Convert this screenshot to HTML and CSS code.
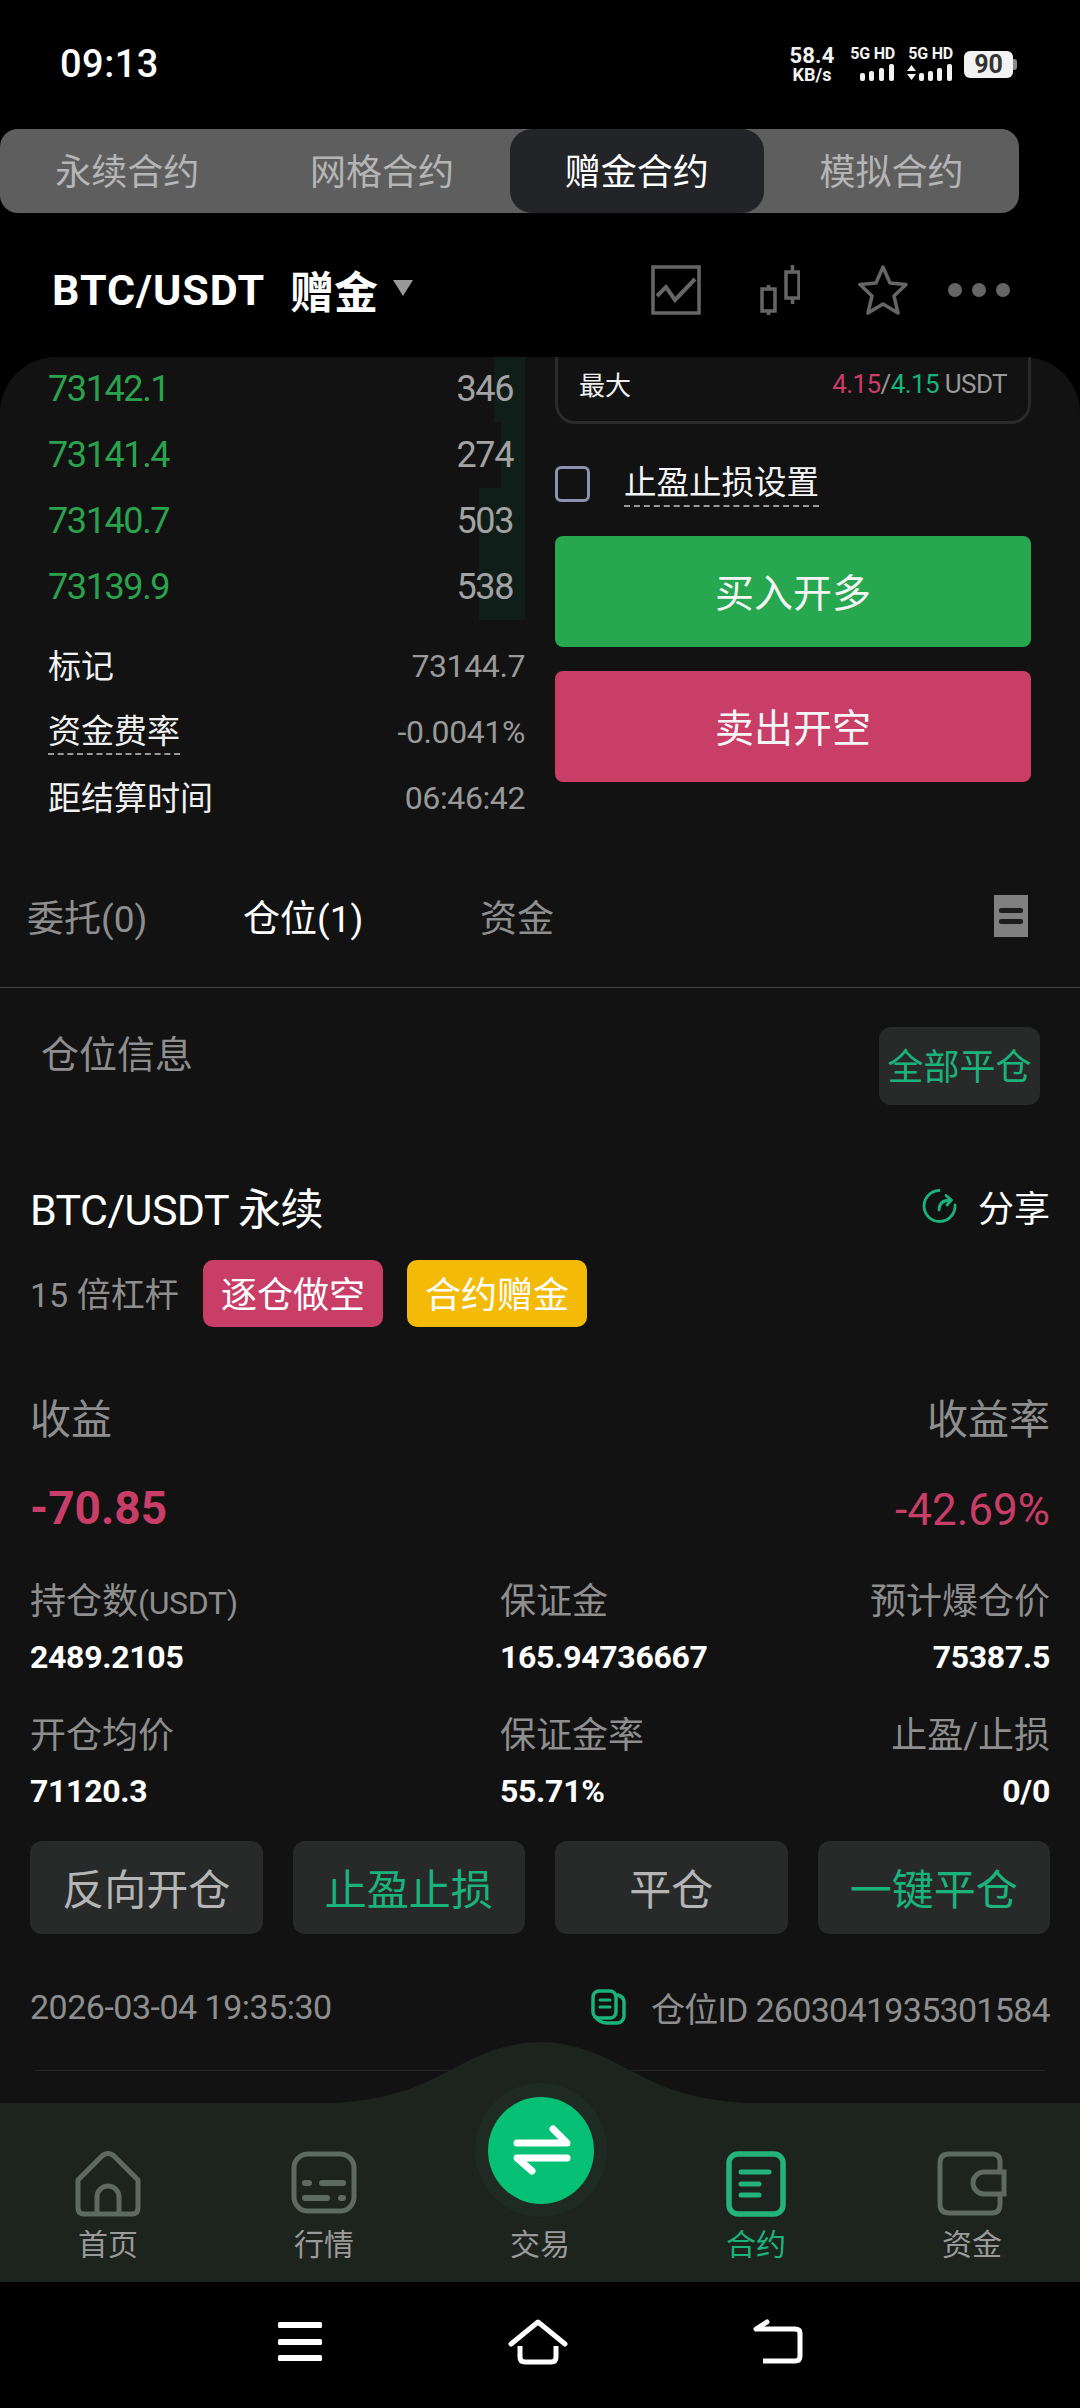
FILE: index.html
```html
<!DOCTYPE html>
<html lang="zh-CN">
<head>
  <meta charset="utf-8">
  <title>赠金合约</title>
  <link rel="stylesheet" href="styles.css">
</head>
<body>
  <div class="page">
    <div class="status-bar">
      <div class="clock">09:13</div>
      <div class="status-right">
        <div class="net-speed"><span class="speed-num">58.4</span><span class="speed-unit">KB/s</span></div>
        <div class="sim">
          <span class="sim-label">5G HD</span>
          <svg width="36" height="17" viewBox="0 0 36 17" fill="#f2f2f2"><rect x="1" y="9" width="5" height="8" rx="2"/><rect x="10" y="7" width="5" height="10" rx="2"/><rect x="20" y="4" width="5" height="13" rx="2"/><rect x="30" y="0" width="5" height="17" rx="2"/></svg>
        </div>
        <div class="sim">
          <span class="sim-label">5G HD</span>
          <svg width="47" height="17" viewBox="0 0 47 17" fill="#f2f2f2"><path d="M1 7 L5.500 1 L10 7Z M1 10 L10 10 L5.500 16Z"/><rect x="13" y="9" width="5" height="8" rx="2"/><rect x="22" y="7" width="5" height="10" rx="2"/><rect x="31" y="4" width="5" height="13" rx="2"/><rect x="41" y="0" width="5" height="17" rx="2"/></svg>
        </div>
        <div class="battery"><span class="battery-level">90</span><span class="battery-nub"></span></div>
      </div>
    </div>

    <div class="contract-tabs">
      <div class="contract-tab">永续合约</div>
      <div class="contract-tab">网格合约</div>
      <div class="contract-tab active">赠金合约</div>
      <div class="contract-tab">模拟合约</div>
    </div>

    <div class="pair-bar">
      <div class="pair-name">BTC/USDT</div>
      <div class="pair-kind">赠金</div>
      <div class="pair-caret"></div>
      <div class="pair-tools">
        <svg width="50" height="50" viewBox="0 0 50 50" fill="none" stroke="#666" stroke-width="3.500"><rect x="2" y="2" width="46" height="46"/><path d="M6 31 L15 22 L24 35 L44 14" stroke-width="4"/></svg>
        <svg class="tool-candle" width="40" height="50" viewBox="0 0 40 50" fill="none" stroke="#666" stroke-width="3.500"><rect x="2" y="24" width="13" height="22"/><path d="M8.500 20 V24 M8.500 46 V50"/><rect x="26" y="7" width="13" height="26"/><path d="M32.500 0 V7 M32.500 33 V39"/></svg>
        <svg class="tool-star" width="50" height="50" viewBox="0 0 50 50" fill="none" stroke="#666" stroke-width="3.500" stroke-linejoin="round"><path d="M25 2 L32 18 L48 19.500 L36 31 L40 48 L25 39 L10 48 L14 31 L2 19.500 L18 18Z"/></svg>
        <div class="tool-dots"><span></span><span></span><span></span></div>
      </div>
    </div>

    <div class="panel">
      <div class="trade-area">
        <div class="book-col">
          <div class="book">
            <div class="book-row"><span class="depth" style="width:31px"></span><span class="book-price">73142.1</span><span class="book-qty">346</span></div>
            <div class="book-row"><span class="depth" style="width:24px"></span><span class="book-price">73141.4</span><span class="book-qty">274</span></div>
            <div class="book-row"><span class="depth" style="width:46px"></span><span class="book-price">73140.7</span><span class="book-qty">503</span></div>
            <div class="book-row"><span class="depth" style="width:46px"></span><span class="book-price">73139.9</span><span class="book-qty">538</span></div>
          </div>
          <div class="info-list">
            <div class="info-row"><span class="info-label">标记</span><span class="info-value">73144.7</span></div>
            <div class="info-row"><span class="info-label dashed">资金费率</span><span class="info-value">-0.0041%</span></div>
            <div class="info-row"><span class="info-label">距结算时间</span><span class="info-value">06:46:42</span></div>
          </div>
        </div>
        <div class="order-col">
          <div class="max-card">
            <span class="max-label">最大</span>
            <span class="max-value"><span class="red">4.15</span>/<span class="green">4.15</span> USDT</span>
          </div>
          <div class="tpsl-row">
            <span class="checkbox"></span>
            <span class="tpsl-label">止盈止损设置</span>
          </div>
          <div class="trade-btn buy">买入开多</div>
          <div class="trade-btn sell">卖出开空</div>
        </div>
      </div>

      <div class="record-tabs">
        <div class="record-tab">委托(0)</div>
        <div class="record-tab active">仓位(1)</div>
        <div class="record-tab">资金</div>
        <div class="record-icon"><span></span><span></span></div>
      </div>

      <div class="position-head">
        <div class="position-title">仓位信息</div>
        <div class="close-all">全部平仓</div>
      </div>

      <div class="position">
        <div class="symbol-row">
          <div class="symbol">BTC/USDT 永续</div>
          <div class="share">
            <svg width="36" height="36" viewBox="0 0 36 36" fill="none" stroke="#1bb37c" stroke-width="2.800" stroke-linecap="round" stroke-linejoin="round"><path d="M17 2.500 A15.500 15.500 0 1 0 33 17"/><path d="M17 22 C17 15 21 12 29 12 M24 7.500 L29.500 12 L25 17"/></svg>
            <span>分享</span>
          </div>
        </div>
        <div class="tag-row">
          <span class="leverage">15 倍杠杆</span>
          <span class="tag short">逐仓做空</span>
          <span class="tag bonus">合约赠金</span>
        </div>
        <div class="pnl-labels">
          <span>收益</span>
          <span>收益率</span>
        </div>
        <div class="pnl-values">
          <span class="pnl-amount">-70.85</span>
          <span class="pnl-rate">-42.69%</span>
        </div>
        <div class="stats">
          <div class="stat-label">持仓数<span class="latin">(USDT)</span></div>
          <div class="stat-label">保证金</div>
          <div class="stat-label end">预计爆仓价</div>
          <div class="stat-value">2489.2105</div>
          <div class="stat-value">165.94736667</div>
          <div class="stat-value end">75387.5</div>
          <div class="stat-label second">开仓均价</div>
          <div class="stat-label second">保证金率</div>
          <div class="stat-label second end">止盈/止损</div>
          <div class="stat-value">71120.3</div>
          <div class="stat-value">55.71%</div>
          <div class="stat-value end">0/0</div>
        </div>
        <div class="action-row">
          <div class="action">反向开仓</div>
          <div class="action accent">止盈止损</div>
          <div class="action">平仓</div>
          <div class="action accent">一键平仓</div>
        </div>
        <div class="meta-row">
          <span>2026-03-04 19:35:30</span>
          <span class="position-id">
            <svg width="36" height="36" viewBox="0 0 36 36" fill="none" stroke="#1bb37c" stroke-width="3.500" stroke-linecap="round"><rect x="2" y="2" width="23" height="27" rx="6"/><path d="M9 11 H19 M9 18 H19" stroke-width="3"/><path d="M27 6 Q33 8 33 13 V27 A7 7 0 0 1 26 34 H16 Q9 34 4 28"/></svg>
            <span>仓位ID 2603041935301584</span>
          </span>
        </div>
        <div class="end-line"></div>
      </div>
    </div>

    <div class="tab-bar">
      <svg class="hump" width="1080" height="62" viewBox="0 0 1080 62"><path d="M300 62 C390 62 420 44 462 22 C490 7 515 0 540 0 C565 0 590 7 618 22 C660 44 690 62 780 62Z" fill="#1d231d"/></svg>
      <div class="trade-orb">
        <div class="orb-core">
          <svg width="64" height="56" viewBox="0 0 64 56" fill="none" stroke="#fff" stroke-width="7" stroke-linecap="round" stroke-linejoin="round"><path d="M8 21 H58 L44 7"/><path d="M58 36 H8 L23 49"/></svg>
        </div>
      </div>
      <div class="tab-item">
        <svg width="66" height="66" viewBox="0 0 66 66" fill="none" stroke="#5e6a60" stroke-width="5" stroke-linejoin="round"><path d="M3 29 L27 5 Q33 0 39 5 L63 29 V57 Q63 63 57 63 H9 Q3 63 3 57Z"/><path d="M22 63 V46 A11 11 0 0 1 44 46 V63"/></svg>
        <span>首页</span>
      </div>
      <div class="tab-item">
        <svg width="66" height="66" viewBox="0 0 66 66" fill="none" stroke="#5e6a60" stroke-width="5" stroke-linecap="round"><rect x="3" y="3" width="60" height="57" rx="14"/><path d="M14 32 H18 M31 32 H52 M14 47 H36 M50 47 H52" stroke-width="6"/></svg>
        <span>行情</span>
      </div>
      <div class="tab-item middle">
        <span>交易</span>
      </div>
      <div class="tab-item active">
        <svg width="66" height="66" viewBox="0 0 66 66" fill="none" stroke="#24b37a" stroke-width="5.500" stroke-linecap="round"><rect x="6" y="3" width="54" height="60" rx="9"/><path d="M18 21 H46 M18 33 H36 M18 44 H36" stroke-width="5"/></svg>
        <span>合约</span>
      </div>
      <div class="tab-item">
        <svg width="70" height="66" viewBox="0 0 70 66" fill="none" stroke="#5e6a60" stroke-width="5"><path d="M63 22 V11 Q63 3 55 3 H12 Q3 3 3 12 V53 Q3 62 12 62 H55 Q63 62 63 53 V43"/><path d="M67 21 H47 A11 11 0 0 0 47 43 H67Z"/></svg>
        <span>资金</span>
      </div>
    </div>

    <div class="system-nav">
      <svg width="46" height="44" viewBox="0 0 46 44" fill="#fff"><rect x="1" y="3" width="44" height="6" rx="1.500"/><rect x="1" y="20" width="44" height="6" rx="1.500"/><rect x="1" y="36" width="44" height="6" rx="1.500"/></svg>
      <svg width="60" height="46" viewBox="0 0 60 46" fill="none" stroke="#fff" stroke-width="5" stroke-linecap="round" stroke-linejoin="round"><path d="M3 25 L30 3 L57 25"/><path d="M12 27 V38 Q12 43 17 43 H43 Q48 43 48 38 V27" stroke-linecap="butt"/></svg>
      <svg width="50" height="46" viewBox="0 0 50 46" fill="none" stroke="#fff" stroke-width="5" stroke-linejoin="round"><path d="M10 42 H42 Q47 42 47 37 V14 Q47 10 42 10 H4"/><path d="M3 10 L14 3" stroke-linecap="round"/></svg>
    </div>
  </div>
</body>
</html>
```

FILE: styles.css
```css
* {
  box-sizing: border-box;
}

html, body {
  margin: 0;
  padding: 0;
  background: #000;
}

body {
  font-family: Roboto, "Noto Sans CJK SC", sans-serif;
  color: #fff;
}

.page {
  width: 1080px;
  height: 2408px;
  display: flex;
  flex-direction: column;
  overflow: hidden;
  background: #000;
}

/* status bar */
.status-bar {
  height: 129px;
  flex: none;
  display: flex;
  justify-content: space-between;
  padding: 41px 63px 0 60px;
}

.clock {
  font-size: 38px;
  line-height: 46px;
  font-weight: 500;
  letter-spacing: 0.5px;
}

.status-right {
  display: flex;
  align-items: flex-start;
  padding-top: 5px;
}

.net-speed {
  display: flex;
  flex-direction: column;
  align-items: center;
  font-weight: 700;
  color: #f2f2f2;
  width: 50px;
  margin-right: 11px;
}

.speed-num {
  font-size: 22px;
  line-height: 20px;
  letter-spacing: 0.2px;
}

.speed-unit {
  font-size: 18px;
  line-height: 17px;
}

.sim {
  display: flex;
  flex-direction: column;
  align-items: flex-end;
  width: 47px;
  margin-right: 11px;
  color: #f2f2f2;
}

.sim svg {
  margin-top: 2px;
}

.sim-label {
  font-size: 16px;
  line-height: 16px;
  font-weight: 700;
  white-space: nowrap;
  letter-spacing: -0.2px;
}

.battery {
  display: flex;
  align-items: center;
  margin-top: 5px;
}

.battery-level {
  width: 49px;
  height: 27px;
  border-radius: 6px;
  background: #f2f2f2;
  color: #333;
  font-size: 25px;
  line-height: 27px;
  font-weight: 700;
  text-align: center;
}

.battery-nub {
  width: 4px;
  height: 11px;
  background: #8a8a8a;
  border-radius: 0 3px 3px 0;
}

/* contract switcher */
.contract-tabs {
  width: 1019px;
  height: 84px;
  flex: none;
  display: flex;
  background: #5e5e5e;
  border-radius: 18px;
}

.contract-tab {
  flex: 1;
  display: flex;
  align-items: center;
  justify-content: center;
  padding-bottom: 4px;
  font-size: 36px;
  color: #b5b5b5;
}

.contract-tab.active {
  background: #232428;
  border-radius: 22px;
  color: #fff;
}

/* pair header */
.pair-bar {
  height: 144px;
  flex: none;
  display: flex;
  align-items: center;
  padding: 10px 70px 0 52px;
}

.pair-name {
  font-size: 43px;
  font-weight: 700;
  letter-spacing: 1px;
}

.pair-kind {
  font-size: 44px;
  font-weight: 700;
  margin-left: 25px;
}

.pair-caret {
  width: 0;
  height: 0;
  margin: -4px 0 0 15px;
  border-left: 10px solid transparent;
  border-right: 10px solid transparent;
  border-top: 16px solid #999;
}

.pair-tools {
  margin-left: auto;
  display: flex;
  align-items: center;
}

.tool-candle {
  margin-left: 59px;
}

.tool-star {
  margin-left: 58px;
}

.tool-dots {
  display: flex;
  gap: 10px;
  margin-left: 40px;
}

.tool-dots span {
  width: 14px;
  height: 14px;
  border-radius: 50%;
  background: #666;
}

/* main panel */
.panel {
  flex: none;
  height: 1746px;
  background: #121212;
  border-radius: 56px 56px 0 0;
  overflow: hidden;
}

.trade-area {
  height: 493px;
  display: flex;
  padding: 0 49px 0 48px;
}

.book-col {
  width: 477px;
  flex: none;
}

.book {
  margin-top: -1px;
}

.book-row {
  position: relative;
  height: 66px;
  display: flex;
  align-items: center;
  justify-content: space-between;
  padding-right: 12px;
  font-size: 36px;
  letter-spacing: -1.4px;
}

.depth {
  position: absolute;
  top: 0;
  right: 0;
  bottom: 0;
  background: #101e1a;
}

.book-price {
  position: relative;
  color: #2ba34e;
}

.book-qty {
  position: relative;
  color: #a3a3a3;
}

.info-list {
  margin-top: 13px;
}

.info-row {
  height: 66px;
  display: flex;
  align-items: center;
  justify-content: space-between;
}

.info-label {
  margin-top: 2px;
  font-size: 33px;
  line-height: 42px;
  color: #f0f0f0;
}

.info-label.dashed {
  border-bottom: 2px dashed #999;
}

.info-value {
  font-size: 32px;
  color: #999;
  letter-spacing: -0.4px;
}

.order-col {
  width: 476px;
  margin-left: 30px;
  flex: none;
}

.max-card {
  height: 97px;
  margin-top: -30px;
  border: 3px solid #2a2a2a;
  border-radius: 20px;
  display: flex;
  align-items: center;
  justify-content: space-between;
  padding: 16px 21px 0 21px;
  font-size: 26px;
}

.max-label {
  color: #f0f0f0;
}

.max-value {
  color: #999;
  letter-spacing: -0.6px;
}

.red {
  color: #c83e66;
}

.green {
  color: #1bb37c;
}

.tpsl-row {
  display: flex;
  align-items: center;
  height: 35px;
  margin-top: 42px;
}

.checkbox {
  width: 35px;
  height: 36px;
  border: 3px solid #8e90b0;
  border-radius: 6px;
}

.tpsl-label {
  margin-left: 34px;
  margin-top: 2px;
  font-size: 32.500px;
  line-height: 42px;
  border-bottom: 2px dashed #999;
  padding-bottom: 1px;
  color: #f5f5f5;
}

.trade-btn {
  height: 111px;
  display: flex;
  align-items: center;
  justify-content: center;
  padding-bottom: 4px;
  border-radius: 8px;
  font-size: 39px;
  color: #f5f5f5;
}

.trade-btn.buy {
  margin-top: 35px;
  background: #27a74f;
}

.trade-btn.sell {
  margin-top: 24px;
  background: #c83e66;
}

/* record tabs */
.record-tabs {
  height: 138px;
  display: grid;
  grid-template-columns: 216px 237px 1fr auto;
  align-items: center;
  padding: 0 52px 6px 27px;
  border-bottom: 1px solid #444;
}

.record-tab {
  font-size: 37px;
  color: #8e8e8e;
}

.record-tab.active {
  color: #fff;
}

.record-icon {
  width: 34px;
  height: 42px;
  background: #808080;
  display: flex;
  flex-direction: column;
  align-items: center;
  justify-content: center;
  gap: 6px;
}

.record-icon span {
  width: 24px;
  height: 5px;
  border-radius: 2px;
  background: #1c1c1c;
}

/* position */
.position-head {
  display: flex;
  justify-content: space-between;
  align-items: flex-start;
  padding: 39px 40px 0 41px;
}

.position-title {
  margin-top: 1px;
  font-size: 38px;
  line-height: 54px;
  color: #8e8e8e;
}

.close-all {
  width: 161px;
  height: 78px;
  display: flex;
  align-items: center;
  justify-content: center;
  padding-bottom: 4px;
  background: #282a2a;
  border-radius: 12px;
  font-size: 36px;
  color: #1bb37c;
  white-space: nowrap;
}

.position {
  padding: 0 30px;
}

.symbol-row {
  height: 60px;
  margin-top: 72px;
  padding-bottom: 2px;
  display: flex;
  align-items: center;
  justify-content: space-between;
}

.symbol {
  font-size: 43px;
  letter-spacing: -0.6px;
}

.share {
  display: flex;
  align-items: center;
  gap: 20px;
  font-size: 36px;
}

.tag-row {
  display: flex;
  align-items: center;
  margin-top: 23px;
}

.leverage {
  width: 173px;
  padding-bottom: 2px;
  font-size: 34px;
  color: #8e8e8e;
  white-space: nowrap;
}

.tag {
  width: 180px;
  height: 67px;
  display: flex;
  align-items: center;
  justify-content: center;
  padding-bottom: 4px;
  border-radius: 10px;
  font-size: 36px;
}

.tag.short {
  background: #c83e66;
}

.tag.bonus {
  margin-left: 24px;
  background: #f3ba08;
}

.pnl-labels {
  height: 50px;
  margin-top: 65px;
  padding-bottom: 2px;
  display: flex;
  align-items: center;
  justify-content: space-between;
  font-size: 41px;
  color: #8e8e8e;
}

.pnl-values {
  height: 60px;
  margin-top: 36px;
  display: flex;
  align-items: center;
  justify-content: space-between;
  color: #c83e66;
}

.pnl-amount {
  font-size: 46px;
  font-weight: 700;
}

.pnl-rate {
  margin-top: 4px;
  font-size: 44px;
}

.stats {
  margin-top: 41px;
  display: grid;
  grid-template-columns: 470px 1fr auto;
}

.stat-label {
  height: 44px;
  line-height: 46px;
  font-size: 36px;
  color: #8e8e8e;
}

.latin {
  font-size: 32px;
  letter-spacing: -0.3px;
}

.stat-label.second {
  margin-top: 36px;
}

.stat-value {
  height: 40px;
  line-height: 40px;
  margin-top: 14px;
  font-size: 32px;
  font-weight: 700;
  letter-spacing: -0.3px;
}

.end {
  text-align: right;
}

.action-row {
  margin-top: 30px;
  display: grid;
  grid-template-columns: repeat(4, 1fr);
  gap: 30px;
}

.action {
  height: 93px;
  display: flex;
  align-items: center;
  justify-content: center;
  padding-bottom: 3px;
  background: #282a2a;
  border-radius: 12px;
  font-size: 42px;
  color: #b5b5b5;
}

.action.accent {
  color: #1bb37c;
}

.meta-row {
  height: 50px;
  margin-top: 48px;
  display: flex;
  align-items: center;
  justify-content: space-between;
  font-size: 34px;
  color: #8e8e8e;
  letter-spacing: -0.5px;
}

.position-id {
  display: flex;
  align-items: center;
  gap: 24px;
  letter-spacing: -0.7px;
}

.end-line {
  height: 1px;
  margin: 38px 5px 0;
  background: #262626;
}

/* bottom tabs */
.tab-bar {
  position: relative;
  height: 179px;
  flex: none;
  display: grid;
  grid-template-columns: repeat(5, 216px);
  background: #1d231d;
}

.hump {
  position: absolute;
  top: -61px;
  left: 0;
}

.trade-orb {
  position: absolute;
  top: -20px;
  left: 475px;
  width: 132px;
  height: 134px;
  border-radius: 50%;
  background: #1f2b22;
  display: flex;
  align-items: center;
  justify-content: center;
}

.orb-core {
  width: 106px;
  height: 107px;
  border-radius: 50%;
  background: #06c075;
  display: flex;
  align-items: center;
  justify-content: center;
}

.tab-item {
  display: flex;
  flex-direction: column;
  align-items: center;
  justify-content: flex-end;
  padding-bottom: 15px;
  font-size: 30px;
  line-height: 44px;
  color: #9a9a9a;
}

.tab-item svg {
  margin-bottom: 6px;
}

.tab-item.active {
  color: #1bb37c;
}

.tab-item span {
  position: relative;
}

/* android nav */
.system-nav {
  flex: 1;
  display: flex;
  align-items: flex-start;
  justify-content: center;
  gap: 185px;
  padding-top: 37px;
  background: #000;
}
```
